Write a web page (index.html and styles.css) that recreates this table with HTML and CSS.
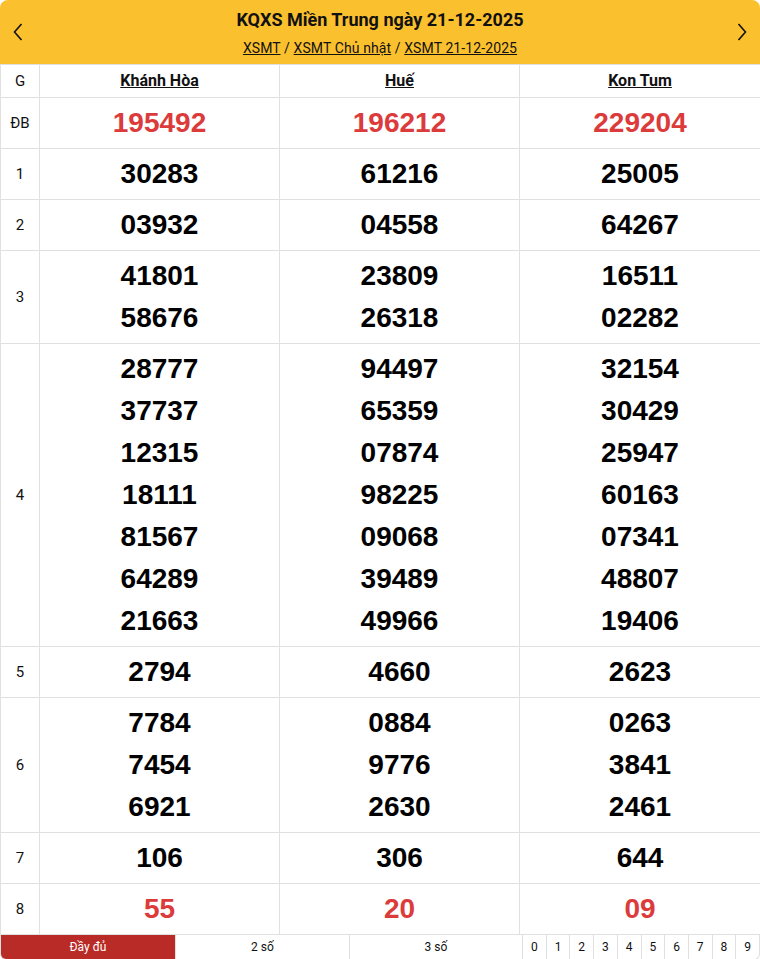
FILE: index.html
```html
<!DOCTYPE html>
<html lang="vi">
<head>
<meta charset="utf-8">
<title>KQXS Miền Trung</title>
<link rel="stylesheet" href="styles.css">
</head>
<body>
<div class="wrap">
  <div class="head">
    <a class="nav" href="#"><svg width="12" height="18" viewBox="0 0 12 18"><path d="M9.5 1 L2.5 9 L9.5 17" fill="none" stroke="#111" stroke-width="1.6"/></svg></a>
    <div class="head-mid">
      <h1 class="title">KQXS Miền Trung ngày 21-12-2025</h1>
      <div class="crumbs"><a href="#">XSMT</a> / <a href="#">XSMT Chủ nhật</a> / <a href="#">XSMT 21-12-2025</a></div>
    </div>
    <a class="nav" href="#"><svg width="12" height="18" viewBox="0 0 12 18"><path d="M2.5 1 L9.5 9 L2.5 17" fill="none" stroke="#111" stroke-width="1.6"/></svg></a>
  </div>
  <table class="kq">
    <colgroup><col class="cg"><col class="cp"><col class="cp"><col class="cl"></colgroup>
    <thead>
      <tr><th class="g">G</th><th><a href="#">Khánh Hòa</a></th><th><a href="#">Huế</a></th><th><a href="#">Kon Tum</a></th></tr>
    </thead>
    <tbody>
      <tr><td class="g">ĐB</td><td class="n red">195492</td><td class="n red">196212</td><td class="n red">229204</td></tr>
      <tr><td class="g">1</td><td class="n">30283</td><td class="n">61216</td><td class="n">25005</td></tr>
      <tr><td class="g">2</td><td class="n">03932</td><td class="n">04558</td><td class="n">64267</td></tr>
      <tr><td class="g">3</td><td class="n"><div>41801</div><div>58676</div></td><td class="n"><div>23809</div><div>26318</div></td><td class="n"><div>16511</div><div>02282</div></td></tr>
      <tr><td class="g">4</td>
        <td class="n"><div>28777</div><div>37737</div><div>12315</div><div>18111</div><div>81567</div><div>64289</div><div>21663</div></td>
        <td class="n"><div>94497</div><div>65359</div><div>07874</div><div>98225</div><div>09068</div><div>39489</div><div>49966</div></td>
        <td class="n"><div>32154</div><div>30429</div><div>25947</div><div>60163</div><div>07341</div><div>48807</div><div>19406</div></td>
      </tr>
      <tr><td class="g">5</td><td class="n">2794</td><td class="n">4660</td><td class="n">2623</td></tr>
      <tr><td class="g">6</td><td class="n"><div>7784</div><div>7454</div><div>6921</div></td><td class="n"><div>0884</div><div>9776</div><div>2630</div></td><td class="n"><div>0263</div><div>3841</div><div>2461</div></td></tr>
      <tr><td class="g">7</td><td class="n">106</td><td class="n">306</td><td class="n">644</td></tr>
      <tr><td class="g">8</td><td class="n red">55</td><td class="n red">20</td><td class="n red">09</td></tr>
    </tbody>
  </table>
  <div class="foot">
    <span class="opt active">Đầy đủ</span>
    <span class="opt">2 số</span>
    <span class="opt">3 số</span>
    <span class="dg">0</span><span class="dg">1</span><span class="dg">2</span><span class="dg">3</span><span class="dg">4</span><span class="dg">5</span><span class="dg">6</span><span class="dg">7</span><span class="dg">8</span><span class="dg">9</span>
  </div>
</div>
</body>
</html>
```
FILE: styles.css
```css
html, body { margin: 0; padding: 0; background: #fff; }
body { font-family: Roboto, "Noto Sans", sans-serif; color: #111; }
.wrap { width: 760px; }
.head {
  height: 64px;
  box-sizing: border-box;
  background: #fbc02d;
  border-radius: 8px 8px 0 0;
  display: flex;
  align-items: center;
}
.nav { width: 36px; display: flex; justify-content: center; align-items: center; height: 64px; }
.nav svg { display: block; }
.head-mid { flex: 1; display: flex; flex-direction: column; align-items: center; padding-top: 8px; height: 64px; box-sizing: border-box; }
.title { margin: 0; font-size: 18px; font-weight: 700; line-height: 24px; color: #111; }
.crumbs { margin-top: 6px; font-size: 14px; line-height: 20px; color: #111; letter-spacing: 0.1px; }
.crumbs a { color: #111; text-decoration: underline; }
.kq { border-collapse: collapse; width: 760px; table-layout: fixed; }
.cg { width: 39px; }
.cp { width: 240px; }
.cl { width: 241px; }
.kq th, .kq td { border: 1px solid #e0e0e0; text-align: center; padding: 0; }
.kq th { height: 32px; font-size: 16px; font-weight: 700; line-height: 20px; }
.kq th.g { font-weight: 400; font-size: 15px; }
.kq th a { color: #111; text-decoration: underline; }
.kq td.g { font-size: 15px; color: #111; }
.kq td.n {
  font-family: "Liberation Sans", Arial, sans-serif;
  font-weight: 700;
  font-size: 28px;
  line-height: 42px;
  padding: 4px 0;
  color: #000;
}
.kq td.red { color: #dc3b3b; }
.foot {
  display: grid;
  grid-template-columns: 174px 174px 173px repeat(10, 1fr);
  height: 25px;
  border: 1px solid #e0e0e0;
  border-top: none;
  border-radius: 0 0 6px 6px;
  overflow: hidden;
  box-sizing: border-box;
  font-size: 12px;
}
.foot span { display: flex; align-items: center; justify-content: center; border-left: 1px solid #e0e0e0; color: #111; }
.foot span:first-child { border-left: none; }
.foot .active { background: #b92b27; color: #fff; }
```
